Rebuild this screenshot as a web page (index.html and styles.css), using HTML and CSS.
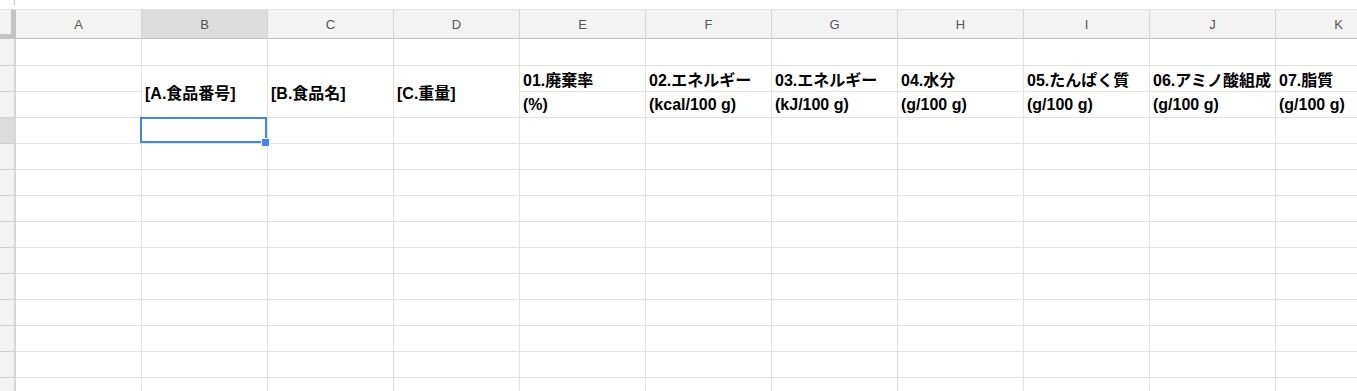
FILE: index.html
```html
<!DOCTYPE html>
<html lang="ja">
<head>
    <meta charset="UTF-8">
    <meta name="viewport" content="width=device-width, initial-scale=1.0">
    <title>食品成分表</title>
    <link rel="stylesheet" href="styles.css">
</head>
<body>
    <div class="toolbar"><div class="tick"></div></div>

    <div class="sheet">
        <!-- column headers -->
        <div class="corner"></div>
        <div class="col">A</div>
        <div class="col active">B</div>
        <div class="col">C</div>
        <div class="col">D</div>
        <div class="col">E</div>
        <div class="col">F</div>
        <div class="col">G</div>
        <div class="col">H</div>
        <div class="col">I</div>
        <div class="col">J</div>
        <div class="col">K</div>

        <!-- row 1 -->
        <div class="rh"></div>
        <div class="c"></div><div class="c"></div><div class="c"></div><div class="c"></div><div class="c"></div><div class="c"></div>
        <div class="c"></div><div class="c"></div><div class="c"></div><div class="c"></div><div class="c"></div>

        <!-- rows 2-3: titles and units -->
        <div class="rh"></div>
        <div class="c"></div>
        <div class="c label tall">[A.食品番号]</div>
        <div class="c label tall">[B.食品名]</div>
        <div class="c label tall">[C.重量]</div>
        <div class="c label">01.廃棄率</div>
        <div class="c label">02.エネルギー</div>
        <div class="c label">03.エネルギー</div>
        <div class="c label">04.水分</div>
        <div class="c label">05.たんぱく質</div>
        <div class="c label">06.アミノ酸組成</div>
        <div class="c label">07.脂質</div>

        <div class="rh"></div>
        <div class="c"></div>
        <div class="c label">(%)</div>
        <div class="c label">(kcal/100 g)</div>
        <div class="c label">(kJ/100 g)</div>
        <div class="c label">(g/100 g)</div>
        <div class="c label">(g/100 g)</div>
        <div class="c label">(g/100 g)</div>
        <div class="c label">(g/100 g)</div>

        <!-- row 4 with selection -->
        <div class="rh active"></div>
        <div class="c"></div>
        <div class="c selected"><div class="sel-box"></div><div class="sel-handle"></div></div>
        <div class="c"></div><div class="c"></div><div class="c"></div><div class="c"></div>
        <div class="c"></div><div class="c"></div><div class="c"></div><div class="c"></div><div class="c"></div>

        <!-- empty rows -->
        <div class="rh"></div><div class="c"></div><div class="c"></div><div class="c"></div><div class="c"></div><div class="c"></div><div class="c"></div><div class="c"></div><div class="c"></div><div class="c"></div><div class="c"></div><div class="c"></div>
        <div class="rh"></div><div class="c"></div><div class="c"></div><div class="c"></div><div class="c"></div><div class="c"></div><div class="c"></div><div class="c"></div><div class="c"></div><div class="c"></div><div class="c"></div><div class="c"></div>
        <div class="rh"></div><div class="c"></div><div class="c"></div><div class="c"></div><div class="c"></div><div class="c"></div><div class="c"></div><div class="c"></div><div class="c"></div><div class="c"></div><div class="c"></div><div class="c"></div>
        <div class="rh"></div><div class="c"></div><div class="c"></div><div class="c"></div><div class="c"></div><div class="c"></div><div class="c"></div><div class="c"></div><div class="c"></div><div class="c"></div><div class="c"></div><div class="c"></div>
        <div class="rh"></div><div class="c"></div><div class="c"></div><div class="c"></div><div class="c"></div><div class="c"></div><div class="c"></div><div class="c"></div><div class="c"></div><div class="c"></div><div class="c"></div><div class="c"></div>
        <div class="rh"></div><div class="c"></div><div class="c"></div><div class="c"></div><div class="c"></div><div class="c"></div><div class="c"></div><div class="c"></div><div class="c"></div><div class="c"></div><div class="c"></div><div class="c"></div>
        <div class="rh"></div><div class="c"></div><div class="c"></div><div class="c"></div><div class="c"></div><div class="c"></div><div class="c"></div><div class="c"></div><div class="c"></div><div class="c"></div><div class="c"></div><div class="c"></div>
        <div class="rh"></div><div class="c"></div><div class="c"></div><div class="c"></div><div class="c"></div><div class="c"></div><div class="c"></div><div class="c"></div><div class="c"></div><div class="c"></div><div class="c"></div><div class="c"></div>
        <div class="rh"></div><div class="c"></div><div class="c"></div><div class="c"></div><div class="c"></div><div class="c"></div><div class="c"></div><div class="c"></div><div class="c"></div><div class="c"></div><div class="c"></div><div class="c"></div>
        <div class="rh"></div><div class="c"></div><div class="c"></div><div class="c"></div><div class="c"></div><div class="c"></div><div class="c"></div><div class="c"></div><div class="c"></div><div class="c"></div><div class="c"></div><div class="c"></div>
        <div class="rh"></div><div class="c"></div><div class="c"></div><div class="c"></div><div class="c"></div><div class="c"></div><div class="c"></div><div class="c"></div><div class="c"></div><div class="c"></div><div class="c"></div><div class="c"></div>
    </div>
</body>
</html>
```

FILE: styles.css
```css
html, body {
    height: 100%;
}
body {
    margin: 0;
    background-color: #fff;
    font-family: "Liberation Sans", "Noto Sans CJK JP", sans-serif;
    overflow: hidden;
}
.toolbar {
    height: 9px;
    padding-left: 14px;
    border-bottom: 1px solid #e1e1e1;
}
.tick {
    width: 1px;
    height: 5px;
    background-color: #c8c8c8;
}
.sheet {
    display: grid;
    grid-template-columns: 16px repeat(11, 126px);
    grid-template-rows: 29px 27px repeat(14, 26px);
    width: max-content;
}
.sheet > div {
    box-sizing: border-box;
    border-right: 1px solid #e2e2e2;
    border-bottom: 1px solid #e2e2e2;
}
.sheet > .corner {
    background-color: #f3f3f3;
    border-right: 5px solid #c4c4c4;
    border-bottom: 5px solid #c4c4c4;
}
.sheet > .col {
    background-color: #f3f3f3;
    border-right: 1px solid #d4d4d4;
    border-bottom: 1px solid #c0c0c0;
    color: #555;
    font-size: 13px;
    display: flex;
    align-items: center;
    justify-content: center;
}
.sheet > .rh {
    background-color: #f3f3f3;
    border-right: 2px solid #d6d6d6;
    border-bottom: 1px solid #cfcfcf;
}
.sheet > .active {
    background-color: #dcdcdc;
}
.label {
    display: flex;
    align-items: center;
    padding: 0 3px;
    font-size: 16px;
    font-weight: bold;
    color: #000;
    white-space: nowrap;
    overflow: hidden;
}
.tall {
    grid-row: span 2;
}
.selected {
    position: relative;
}
.sel-box {
    position: absolute;
    left: -2px;
    top: -1px;
    width: 127px;
    height: 26px;
    box-sizing: border-box;
    border: 2px solid #4285f4;
}
.sel-handle {
    position: absolute;
    left: 119px;
    top: 20px;
    width: 9px;
    height: 9px;
    box-sizing: border-box;
    background-color: #4285f4;
    border: 1px solid #fff;
}
```
